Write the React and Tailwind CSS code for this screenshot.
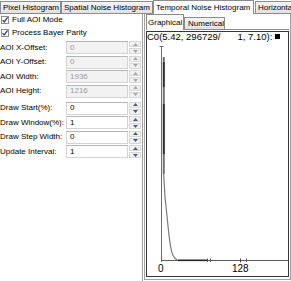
import React from "react";

const aoiFields = [
  { label: "AOI X-Offset:", value: "0" },
  { label: "AOI Y-Offset:", value: "0" },
  { label: "AOI Width:", value: "1936" },
  { label: "AOI Height:", value: "1216" },
];

const drawFields = [
  { label: "Draw Start(%):", value: "0" },
  { label: "Draw Window(%):", value: "1" },
  { label: "Draw Step Width:", value: "0" },
  { label: "Update Interval:", value: "1" },
];

function Tab({ children, className }) {
  return (
    <div
      className={`h-[13px] shrink-0 overflow-hidden whitespace-nowrap border border-[#8c8c8c] bg-linear-to-b from-[#f4f4f4] to-[#e1e1e1] px-[2px] leading-[11px] ${className}`}
    >
      {children}
    </div>
  );
}

function Check({ label }) {
  return (
    <div className="flex h-[10px] items-center">
      <svg width="8" height="8" viewBox="0 0 8 8" className="ml-[1px] shrink-0">
        <rect x="0.5" y="0.5" width="7" height="7" fill="#fff" stroke="#8e8f8f" />
        <path d="M1.6 4.1 L3.2 5.9 L6.6 1.3" fill="none" stroke="#2b4392" strokeWidth="1.3" />
      </svg>
      <span className="ml-[3px] whitespace-nowrap">{label}</span>
    </div>
  );
}

function Spin({ disabled }) {
  const c = disabled ? "#a9a9a9" : "#4b5b7a";
  return (
    <div className="ml-[1px] flex h-[13px] w-[12px] shrink-0 flex-col gap-[1px]">
      <div className="flex flex-1 items-center justify-center border border-[#d6d6d6] bg-[#f1f1f1]">
        <svg width="5" height="3" viewBox="0 0 5 3">
          <path d="M0 3 L2.5 0 L5 3Z" fill={c} />
        </svg>
      </div>
      <div className="flex flex-1 items-center justify-center border border-[#d6d6d6] bg-[#f1f1f1]">
        <svg width="5" height="3" viewBox="0 0 5 3">
          <path d="M0 0 L2.5 3 L5 0Z" fill={c} />
        </svg>
      </div>
    </div>
  );
}

function Field({ label, value, disabled }) {
  return (
    <div className="flex h-[13px] items-center">
      <span className="w-[66px] shrink-0 whitespace-nowrap">{label}</span>
      <div
        className={`flex h-[13px] w-[62px] shrink-0 items-center border border-[#d3d3d3] border-t-[#b5b5b5] pl-[3px] ${
          disabled ? "bg-[#f2f2f2] text-[#9b9b9b]" : "bg-white text-black"
        }`}
      >
        {value}
      </div>
      <Spin disabled={disabled} />
    </div>
  );
}

function Chart() {
  // page coords minus (147, 32)
  const curve =
    "M16.5 25 L16.5 140 L17 148 L18 165 L19.7 181 L21 194 L22.3 206 L23.5 214 L24.7 219.7 L26 223.5 L28 226.3 L31 228.5";
  return (
    <svg width="141" height="244" viewBox="0 0 141 244" className="absolute left-0 top-0">
      <line x1="14.5" y1="14" x2="14.5" y2="230" stroke="#6e6e6e" strokeWidth="1" />
      <line x1="12.5" y1="14.5" x2="16.5" y2="14.5" stroke="#6e6e6e" strokeWidth="1" />
      <line x1="14" y1="228.5" x2="141" y2="228.5" stroke="#5a5a5a" strokeWidth="1" />
      <path d={curve} fill="none" stroke="#7a7a7a" strokeWidth="1.2" />
      <line x1="16.8" y1="25" x2="16.8" y2="142" stroke="#6a6a6a" strokeWidth="1.8" />
      <line x1="16.8" y1="30" x2="16.8" y2="55" stroke="#2e2e2e" strokeWidth="1.8" />
      <line x1="16.8" y1="72" x2="16.8" y2="122" stroke="#2e2e2e" strokeWidth="1.8" />
      <line x1="31" y1="228.3" x2="61" y2="228.3" stroke="#222" strokeWidth="1.6" />
      <line x1="60.5" y1="226.5" x2="60.5" y2="230" stroke="#555" strokeWidth="1" />
      <line x1="63.5" y1="226.5" x2="63.5" y2="230" stroke="#555" strokeWidth="1" />
      <line x1="93.5" y1="226.5" x2="93.5" y2="230.5" stroke="#444" strokeWidth="1" />
      <line x1="99.5" y1="226.5" x2="99.5" y2="230" stroke="#666" strokeWidth="1" />
    </svg>
  );
}

export default function App() {
  return (
    <div className="h-[281px] w-[291px] overflow-hidden bg-white font-['Liberation_Sans',Arial,sans-serif] text-[8px] text-black">
      <div className="flex h-[14px] items-end">
        <Tab className="w-[61px]">Pixel Histogram</Tab>
        <Tab className="w-[92px]">Spatial Noise Histogram</Tab>
        <div className="h-[14px] w-[101px] shrink-0 whitespace-nowrap border-x border-t border-[#8c8c8c] bg-white px-[2px] leading-[13px]">
          Temporal Noise Histogram
        </div>
        <div className="h-[1px] w-[1px] shrink-0 bg-[#8c8c8c]" />
        <Tab className="w-[90px]">Horizontal Noise Histogram</Tab>
      </div>

      <div className="flex h-[267px] items-start">
        <div className="flex h-[267px] w-[143px] shrink-0 flex-col border-r border-[#a0a0a0]">
          <div className="mt-[1px]">
            <Check label="Full AOI Mode" />
          </div>
          <div className="mt-[3px]">
            <Check label="Process Bayer Parity" />
          </div>
          <div className="mt-[3px] flex flex-col gap-[1.5px]">
            {aoiFields.map((f) => (
              <Field key={f.label} label={f.label} value={f.value} disabled />
            ))}
          </div>
          <div className="mt-[4px] flex flex-col gap-[1.5px]">
            {drawFields.map((f) => (
              <Field key={f.label} label={f.label} value={f.value} />
            ))}
          </div>
        </div>

        <div className="ml-[1px] flex h-[266px] w-[147px] shrink-0 flex-col border-x border-b border-[#a0a0a0] px-[1px] pb-[2px]">
          <div className="flex h-[16px] shrink-0 items-end">
            <div className="h-[16px] w-[38px] shrink-0 border-x border-t border-[#8c8c8c] bg-white pl-[1px] leading-[15px]">
              Graphical
            </div>
            <Tab className="w-[41px] pl-[3px]">Numerical</Tab>
            <div className="h-[1px] flex-1 bg-[#8c8c8c]" />
          </div>
          <div className="relative mt-[1px] flex-1 border border-[#363636] bg-white">
            <div className="relative z-10 flex items-center whitespace-nowrap text-[9.5px] leading-[9px]">
              <span>C0(5.42, 296729/</span>
              <span className="w-[17px] shrink-0" />
              <span>1, 7.10):</span>
              <span className="ml-[3px] h-[5px] w-[5px] shrink-0 bg-black" />
            </div>
            <Chart />
            <span className="absolute left-[11px] top-[232px] text-[10px] leading-[10px]">0</span>
            <span className="absolute left-[85px] top-[232px] text-[10px] leading-[10px]">128</span>
          </div>
        </div>
      </div>
    </div>
  );
}
